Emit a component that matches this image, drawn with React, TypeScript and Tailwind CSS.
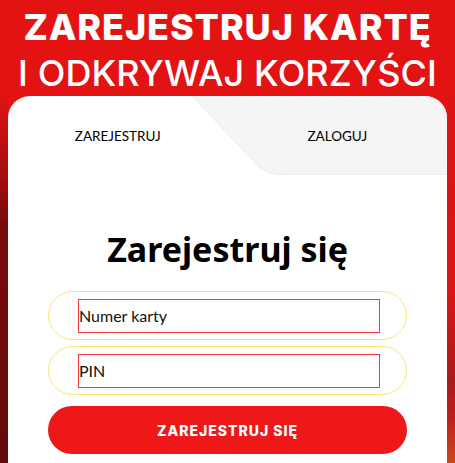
import React from "react";

const head = { fontFamily: "Inter, 'Noto Sans', sans-serif" };
const geo = { fontFamily: "'Noto Sans', 'DejaVu Sans', sans-serif" };
const light = { fontFamily: "Lato, 'Noto Sans', sans-serif" };

export default function App() {
  return (
    <div className="w-[455px] h-[463px] overflow-hidden bg-[#e31313] flex flex-col">
      <header className="h-[96px] flex flex-col items-center pt-[4px] text-white" style={head}>
        <h1 className="text-[36px] leading-[46px] font-extrabold tracking-[0.9px] whitespace-nowrap">
          ZAREJESTRUJ KARTĘ
        </h1>
        <p className="text-[36px] leading-[46px] font-medium tracking-[0.1px] whitespace-nowrap">
          I ODKRYWAJ KORZYŚCI
        </p>
      </header>

      <div className="flex flex-1">
        <div className="w-2 bg-[linear-gradient(to_bottom,#e01313_0%,#c81010_10%,#7a0b0b_35%,#630a0a_100%)]" />

        <main className="flex-1 bg-white rounded-t-[22px] overflow-hidden">
          <Tabs />

          <div className="px-10 pt-[54px]">
            <h2
              className="text-center text-[34px] leading-[40px] font-bold text-black"
              style={geo}
            >
              Zarejestruj się
            </h2>

            <form className="mt-[22px] flex flex-col gap-[6px]">
              <Field placeholder="Numer karty" />
              <Field placeholder="PIN" type="password" />
              <button
                type="button"
                className="mt-[5px] h-[48px] rounded-full bg-[#ee1818] text-white text-[14px] font-extrabold tracking-[1px]"
                style={head}
              >
                ZAREJESTRUJ SIĘ
              </button>
            </form>
          </div>
        </main>

        <div className="w-2 bg-[linear-gradient(to_bottom,#e01313_0%,#dc1515_53%,#a81a1a_78%,#c0201a_88%,#c84a1e_100%)]" />
      </div>
    </div>
  );
}

function Tabs() {
  return (
    <div className="relative h-[79px]">
      {/* szare tło zakładki "zaloguj" */}
      <svg className="absolute inset-0" width="439" height="79" viewBox="0 0 439 79">
        <path d="M184 0 L250 70 Q258 79 280 79 L439 79 L439 0 Z" fill="#f5f5f5" />
        <path d="M184 0 L250 70 Q258 79 280 79 L439 79" fill="none" stroke="#ebebeb" strokeWidth="1" />
      </svg>
      <div className="relative grid grid-cols-2 h-full text-[13.5px] text-black" style={light}>
        <button type="button" className="flex items-center justify-center pt-[2px]">
          ZAREJESTRUJ
        </button>
        <button type="button" className="flex items-center justify-center pt-[2px]">
          ZALOGUJ
        </button>
      </div>
    </div>
  );
}

function Field({ placeholder, type = "text" }: { placeholder: string; type?: string }) {
  return (
    <div
      className="h-[49px] rounded-full border border-[#fde47a] pl-[29px] pr-[26px] flex items-center"
      data-type={type}
    >
      <div className="w-full h-[34px] border border-[#f43b3b] flex items-center">
        <span className="text-[16px] text-[#111]" style={light}>
          {placeholder}
        </span>
      </div>
    </div>
  );
}
